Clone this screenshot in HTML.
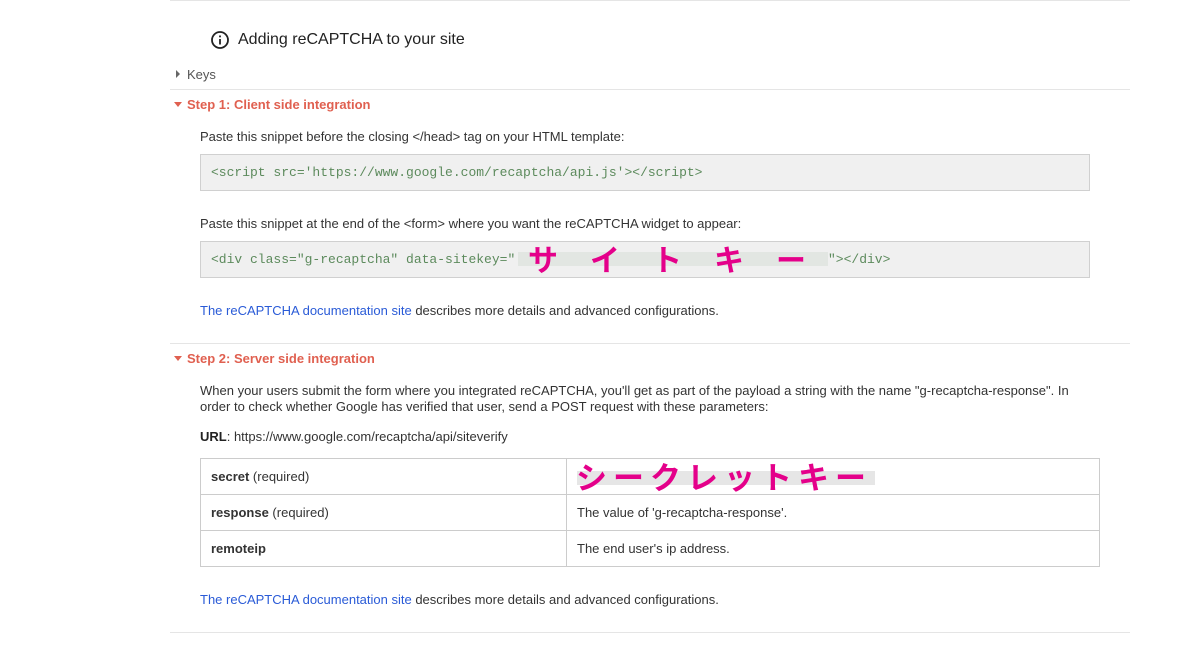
<!DOCTYPE html>
<html><head><meta charset="utf-8"><style>
body{margin:0;width:1200px;height:669px;background:#fff;font-family:"Liberation Sans",Arial,sans-serif;color:#333;font-size:13px;position:relative;overflow:hidden}
.a{position:absolute}
.hr{position:absolute;left:170px;width:960px;height:1px;background:#e5e5e5}
.step{color:#e06050;font-weight:bold;font-size:13px}
.code{position:absolute;left:200px;background:#f0f0f0;border:1px solid #d0d0d0;font-family:"Liberation Mono",monospace;font-size:13px;color:#5c8a5c;line-height:35px;padding-left:10px;box-sizing:border-box;width:890px;height:37px;white-space:pre}
a{color:#2a5bd7;text-decoration:none}
table{position:absolute;left:200px;top:458px;width:900px;border-collapse:collapse}
td{border:1px solid #ccc;height:35px;padding:0 10px;font-size:13px}
.jp{font-family:"Noto Sans CJK JP",sans-serif;color:#e4008a;font-weight:700}
</style></head><body>
<div class="hr" style="top:0"></div>
<svg class="a" style="left:210px;top:30px" width="20" height="20" viewBox="0 0 20 20"><circle cx="10" cy="10" r="8" fill="none" stroke="#222" stroke-width="1.8"/><rect x="9.1" y="9" width="1.8" height="5.5" fill="#222"/><rect x="9.1" y="5.5" width="1.8" height="1.8" fill="#222"/></svg>
<div class="a" style="left:238px;top:31px;font-size:16px;color:#222">Adding reCAPTCHA to your site</div>
<div class="a" style="left:176px;top:70px;width:0;height:0;border-left:4px solid #666;border-top:4px solid transparent;border-bottom:4px solid transparent"></div>
<div class="a" style="left:187px;top:67px;color:#555">Keys</div>
<div class="hr" style="top:89px"></div>
<div class="a" style="left:174px;top:102px;width:0;height:0;border-top:5px solid #e06050;border-left:4px solid transparent;border-right:4px solid transparent"></div>
<div class="a step" style="left:187px;top:97px">Step 1: Client side integration</div>
<div class="a" style="left:200px;top:129px">Paste this snippet before the closing &lt;/head&gt; tag on your HTML template:</div>
<div class="code" style="top:154px">&lt;script src='https://www.google.com/recaptcha/api.js'&gt;&lt;/script&gt;</div>
<div class="a" style="left:200px;top:216px">Paste this snippet at the end of the &lt;form&gt; where you want the reCAPTCHA widget to appear:</div>
<div class="code" style="top:241px">&lt;div class="g-recaptcha" data-sitekey="</div>
<div class="a" style="left:518px;top:252px;width:310px;height:14px;background:#e2e6e2"></div>
<div class="a" style="left:828px;top:242px;font-family:'Liberation Mono',monospace;font-size:13px;color:#5c8a5c;line-height:35px">"&gt;&lt;/div&gt;</div>
<div class="a jp" style="left:528px;top:238px;font-size:30px;letter-spacing:32px;line-height:40px">サイトキー</div>
<div class="a" style="left:200px;top:303px"><a>The reCAPTCHA documentation site</a> describes more details and advanced configurations.</div>
<div class="hr" style="top:343px"></div>
<div class="a" style="left:174px;top:356px;width:0;height:0;border-top:5px solid #e06050;border-left:4px solid transparent;border-right:4px solid transparent"></div>
<div class="a step" style="left:187px;top:351px">Step 2: Server side integration</div>
<div class="a" style="left:200px;top:383px;width:900px;line-height:16px">When your users submit the form where you integrated reCAPTCHA, you'll get as part of the payload a string with the name "g-recaptcha-response". In order to check whether Google has verified that user, send a POST request with these parameters:</div>
<div class="a" style="left:200px;top:429px"><b style="color:#222">URL</b>: https://www.google.com/recaptcha/api/siteverify</div>
<table>
<tr><td style="width:345px"><b>secret</b> (required)</td><td></td></tr>
<tr><td><b>response</b> (required)</td><td>The value of 'g-recaptcha-response'.</td></tr>
<tr><td><b>remoteip</b></td><td>The end user's ip address.</td></tr>
</table>
<div class="a" style="left:577px;top:471px;width:298px;height:14px;background:#e6e6e6"></div>
<div class="a jp" style="left:576px;top:458px;font-size:31px;line-height:36px;letter-spacing:6px">シークレットキー</div>
<div class="a" style="left:200px;top:592px"><a>The reCAPTCHA documentation site</a> describes more details and advanced configurations.</div>
<div class="hr" style="top:632px"></div>
</body></html>
